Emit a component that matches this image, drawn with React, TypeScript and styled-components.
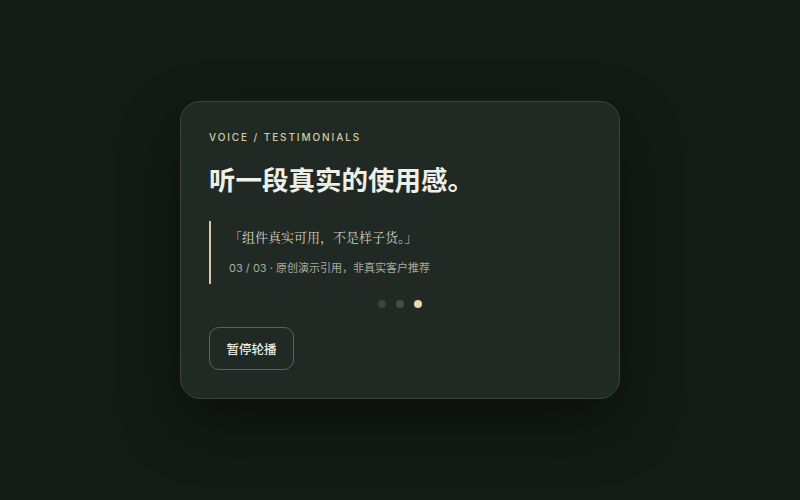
import styled, { createGlobalStyle } from "styled-components";

const GlobalStyle = createGlobalStyle`
  html, body {
    margin: 0;
    padding: 0;
    background: #141b16;
  }
  body {
    font-family: Inter, "Noto Sans CJK SC", sans-serif;
  }
`;

const Page = styled.div`
  width: 800px;
  height: 500px;
  display: flex;
  align-items: center;
  justify-content: center;
  background: #141b16;
`;

const Card = styled.section`
  box-sizing: border-box;
  width: 440px;
  height: 298px;
  padding: 28px 28px 28px;
  border: 1px solid #3a443c;
  border-radius: 20px;
  background: #212924;
  box-shadow: 0 24px 60px rgba(0, 0, 0, 0.45);
  display: flex;
  flex-direction: column;
  align-items: flex-start;
`;

const Eyebrow = styled.div`
  font-family: Inter, "Noto Sans CJK SC", sans-serif;
  font-size: 10px;
  line-height: 14px;
  letter-spacing: 1.9px;
  color: #d8c9a2;
  font-weight: 500;
`;

const Title = styled.h2`
  margin: 19px 0 0;
  font-family: Inter, "Noto Sans CJK SC", sans-serif;
  font-size: 26.5px;
  line-height: 34px;
  font-weight: 700;
  color: #eef0e7;
`;

const Quote = styled.blockquote`
  margin: 24px 0 0;
  padding: 6px 0 7px 18px;
  border-left: 2px solid #d8c9a2;
  align-self: stretch;
`;

const QuoteText = styled.p`
  margin: 0;
  font-family: "Noto Serif CJK SC", serif;
  font-size: 13px;
  line-height: 20px;
  color: #cfcfc3;
`;

const Meta = styled.p`
  margin: 12px 0 0;
  font-family: Inter, "Noto Sans CJK SC", sans-serif;
  font-size: 11px;
  line-height: 18px;
  color: #a8aca0;
`;

const Dots = styled.div`
  align-self: stretch;
  margin-top: 16px;
  display: flex;
  justify-content: center;
  gap: 10px;
`;

const Dot = styled.span<{ $active?: boolean; $tone: string }>`
  width: 8px;
  height: 8px;
  border-radius: 50%;
  background: ${(p) => (p.$active ? "#ead7ab" : p.$tone)};
`;

const Button = styled.button`
  margin-top: 19px;
  box-sizing: border-box;
  width: 85px;
  height: 43px;
  border: 1px solid #5b645a;
  border-radius: 10px;
  background: transparent;
  color: #ecece0;
  font-family: Inter, "Noto Sans CJK SC", sans-serif;
  font-size: 12.5px;
  font-weight: 500;
  cursor: pointer;
`;

export default function App() {
  const dots = ["#3b473e", "#3c5541", "#ead7ab"];
  return (
    <Page>
      <GlobalStyle />
      <Card>
        <Eyebrow>VOICE / TESTIMONIALS</Eyebrow>
        <Title>听一段真实的使用感。</Title>
        <Quote>
          <QuoteText>「组件真实可用，不是样子货。」</QuoteText>
          <Meta>03 / 03 · 原创演示引用，非真实客户推荐</Meta>
        </Quote>
        <Dots>
          {dots.map((c, i) => (
            <Dot key={i} $tone={c} $active={i === 2} />
          ))}
        </Dots>
        <Button>暂停轮播</Button>
      </Card>
    </Page>
  );
}
